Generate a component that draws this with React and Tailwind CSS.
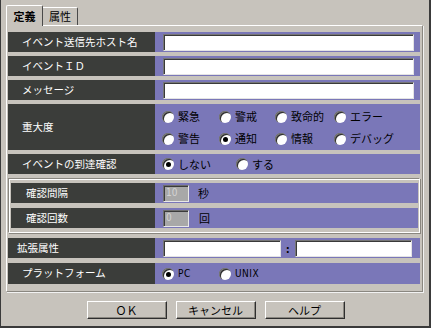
import React from "react";

const JP = { fontFamily: '"Noto Sans CJK JP", "Noto Sans", sans-serif' };

function Radio({ checked }) {
  return (
    <span className="relative inline-block w-[12px] h-[12px] rounded-full bg-white shadow-[inset_1px_1px_0_#7a7a7a,inset_2px_2px_0_#2e2e2e] shrink-0">
      {checked && (
        <span className="absolute left-[4px] top-[4px] w-[5px] h-[5px] rounded-full bg-black" />
      )}
    </span>
  );
}

function RadioItem({ checked, label, w, latin }) {
  return (
    <div className={`flex items-center h-[12px] ${w}`}>
      <span className="ml-[-1px] flex"><Radio checked={checked} /></span>
      <span
        className={latin ? "ml-[4px] text-[10px] leading-none text-black tracking-[0.5px]" : "ml-[4px] text-[11px] leading-none text-black"}
        style={latin ? { fontFamily: '"DejaVu Sans Condensed", "Liberation Sans", sans-serif' } : JP}
      >
        {label}
      </span>
    </div>
  );
}

function TextInput({ w }) {
  return (
    <div
      className={`${w} h-[17px] bg-white border border-t-[#777] border-l-[#777] border-r-[#e4e4e4] border-b-[#e4e4e4] shadow-[inset_1px_1px_0_#3a3a3a]`}
    />
  );
}

function DisabledInput({ value }) {
  return (
    <div className="w-[26px] h-[17px] bg-[#a8a8a8] border border-t-[#6e6e6e] border-l-[#6e6e6e] border-r-[#e8e8e8] border-b-[#e8e8e8] shadow-[inset_1px_1px_0_#3a3a3a] flex items-center pl-[2px]">
      <span className="text-[10px] leading-none text-[#d4d4d4]" style={{ fontFamily: '"DejaVu Sans Condensed", "Liberation Sans", sans-serif' }}>{value}</span>
    </div>
  );
}

function Row({ label, h = "h-[20px]", labelW = "w-[147px]", pl = "pl-[14px]", children, className = "" }) {
  return (
    <div className={`flex ${h} ${className}`}>
      <div className={`${labelW} bg-[#3b3d3a] flex items-center ${pl}`}>
        <span className="text-white text-[10.5px] leading-none" style={JP}>{label}</span>
      </div>
      <div className="flex-1 bg-[#7a77b8] flex items-center pl-[8px]">{children}</div>
    </div>
  );
}

function Button({ children }) {
  return (
    <div className="w-[80px] h-[18px] bg-[#c7c3bc] border border-t-white border-l-white border-r-[#2e2e2e] border-b-[#2e2e2e] shadow-[inset_-1px_-1px_0_#8a8780] flex items-center justify-center">
      <span className="text-[11px] text-black leading-none" style={JP}>{children}</span>
    </div>
  );
}

export default function App() {
  return (
    <div className="w-[431px] h-[328px] bg-[#c7c3bc] border-l border-l-[#3a3a3a] border-r-2 border-r-[#3a3a3a] border-b-2 border-b-[#3a3a3a] pl-[5px] pt-[5px]" style={JP}>
      {/* Tabs */}
      <div className="flex items-end h-[20px]">
        <div className="w-[37px] h-[21px] border-t border-l border-t-white border-l-white border-r border-r-[#4a4a4a] rounded-tl-[2px] rounded-tr-[2px] flex items-center justify-center relative z-10 bg-[#c7c3bc] mb-[-1px]">
          <span className="text-[11px] font-bold text-black leading-none" style={JP}>定義</span>
        </div>
        <div className="w-[35px] h-[18px] border-t border-t-white border-r border-r-[#4a4a4a] rounded-tr-[2px] flex items-center justify-center">
          <span className="text-[11px] text-black leading-none" style={JP}>属性</span>
        </div>
      </div>

      {/* Panel */}
      <div className="w-[417px] h-[267px] border border-t-white border-l-white border-r-[#8a8780] border-b-[#8a8780] shadow-[1px_1px_0_#f2f2f2] pl-[1px] pr-[2px] pt-[6px] flex flex-col">
        <Row label="イベント送信先ホスト名">
          <TextInput w="w-[251px]" />
        </Row>
        <Row label="イベントＩＤ" className="mt-[4px]">
          <TextInput w="w-[251px]" />
        </Row>
        <Row label="メッセージ" className="mt-[4px]">
          <TextInput w="w-[251px]" />
        </Row>
        <Row label="重大度" h="h-[46px]" className="mt-[4px]">
          <div className="flex flex-col gap-[10px] mt-[1px]">
            <div className="flex">
              <RadioItem label="緊急" w="w-[57px]" />
              <RadioItem label="警戒" w="w-[56px]" />
              <RadioItem label="致命的" w="w-[59px]" />
              <RadioItem label="エラー" w="w-[60px]" />
            </div>
            <div className="flex">
              <RadioItem label="警告" w="w-[57px]" />
              <RadioItem label="通知" checked w="w-[56px]" />
              <RadioItem label="情報" w="w-[59px]" />
              <RadioItem label="デバッグ" w="w-[60px]" />
            </div>
          </div>
        </Row>
        <Row label="イベントの到達確認" className="mt-[4px]">
          <div className="flex">
            <RadioItem label="しない" checked w="w-[74px]" />
            <RadioItem label="する" w="w-[60px]" />
          </div>
        </Row>

        {/* Group box */}
        <div className="mt-[4px] h-[55px] border border-t-[#8a8780] border-l-[#8a8780] border-r-white border-b-white shadow-[inset_1px_1px_0_#ffffff,1px_1px_0_#8a8780] pl-[2px] pr-[1px] pt-[4px] flex flex-col">
          <Row label="確認間隔" labelW="w-[144px]" pl="pl-[15px]">
            <DisabledInput value="10" />
            <span className="ml-[9px] text-[11px] leading-none text-black" style={JP}>秒</span>
          </Row>
          <Row label="確認回数" labelW="w-[144px]" pl="pl-[15px]" className="mt-[5px]">
            <DisabledInput value="0" />
            <span className="ml-[10px] text-[11px] leading-none text-black" style={JP}>回</span>
          </Row>
        </div>

        <Row label="拡張属性" pl="pl-[9px]" className="mt-[5px]">
          <TextInput w="w-[118px]" />
          <span className="mx-[5px] text-[11px] text-black font-bold leading-none">:</span>
          <TextInput w="w-[117px]" />
        </Row>
        <Row label="プラットフォーム" h="h-[21px]" className="mt-[5px]">
          <div className="flex">
            <RadioItem label="PC" checked w="w-[57px]" latin />
            <RadioItem label="UNIX" w="w-[60px]" latin />
          </div>
        </Row>
      </div>

      {/* Buttons */}
      <div className="flex justify-center gap-[9px] mt-[9px] pr-[4px]">
        <Button>ＯＫ</Button>
        <Button>キャンセル</Button>
        <Button>ヘルプ</Button>
      </div>
    </div>
  );
}
